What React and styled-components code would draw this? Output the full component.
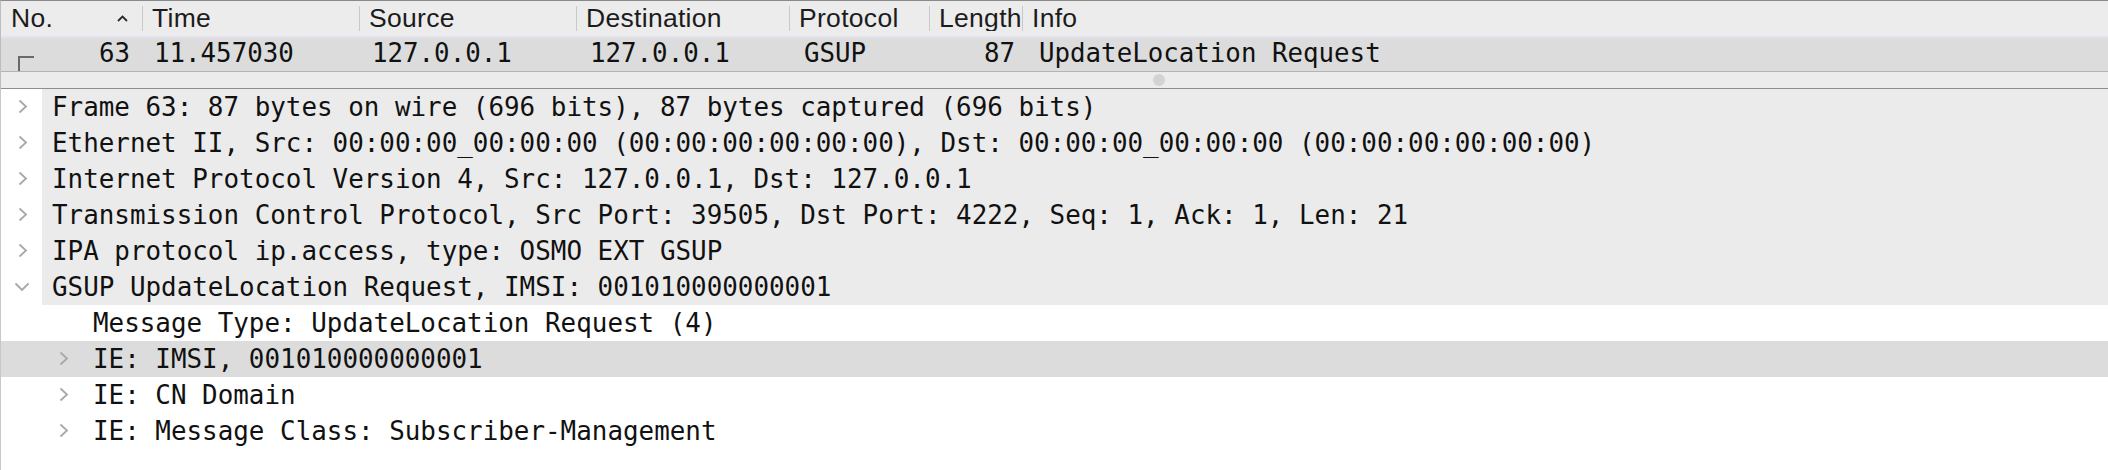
import React from "react";
import styled, { createGlobalStyle } from "styled-components";

const GlobalStyle = createGlobalStyle`
  html, body {
    margin: 0;
    padding: 0;
    background: #ffffff;
  }
`;

const mono = `"DejaVu Sans Mono", "Liberation Mono", monospace`;
const sans = `"Liberation Sans", Arial, sans-serif`;

const columns = [
  { key: "no", title: "No.", width: 141, align: "right" },
  { key: "time", title: "Time", width: 217 },
  { key: "source", title: "Source", width: 217 },
  { key: "destination", title: "Destination", width: 213 },
  { key: "protocol", title: "Protocol", width: 140 },
  { key: "length", title: "Length", width: 93, align: "right", clip: true },
  { key: "info", title: "Info", width: null },
];

const packet = {
  no: "63",
  time: "11.457030",
  source: "127.0.0.1",
  destination: "127.0.0.1",
  protocol: "GSUP",
  length: "87",
  info: "UpdateLocation Request",
};

const treeItems = [
  { text: "Frame 63: 87 bytes on wire (696 bits), 87 bytes captured (696 bits)", depth: 0, toggle: "closed" },
  { text: "Ethernet II, Src: 00:00:00_00:00:00 (00:00:00:00:00:00), Dst: 00:00:00_00:00:00 (00:00:00:00:00:00)", depth: 0, toggle: "closed" },
  { text: "Internet Protocol Version 4, Src: 127.0.0.1, Dst: 127.0.0.1", depth: 0, toggle: "closed" },
  { text: "Transmission Control Protocol, Src Port: 39505, Dst Port: 4222, Seq: 1, Ack: 1, Len: 21", depth: 0, toggle: "closed" },
  { text: "IPA protocol ip.access, type: OSMO EXT GSUP", depth: 0, toggle: "closed" },
  { text: "GSUP UpdateLocation Request, IMSI: 001010000000001", depth: 0, toggle: "open" },
  { text: "Message Type: UpdateLocation Request (4)", depth: 1, toggle: null },
  { text: "IE: IMSI, 001010000000001", depth: 1, toggle: "closed", selected: true },
  { text: "IE: CN Domain", depth: 1, toggle: "closed" },
  { text: "IE: Message Class: Subscriber-Management", depth: 1, toggle: "closed" },
];

const Window = styled.div`
  width: 2108px;
  height: 470px;
  overflow: hidden;
  display: flex;
  flex-direction: column;
  background: #ffffff;
`;

const PacketList = styled.div`
  border-top: 1px solid #8a8a8a;
  border-left: 1px solid #bdbdbd;
  display: flex;
  flex-direction: column;
`;

const HeaderBar = styled.div`
  display: flex;
  align-items: center;
  height: 35px;
  background: #ececec;
  border-bottom: 2px solid #e4e2ef;
`;

const HeaderCell = styled.div`
  display: flex;
  align-items: center;
  box-sizing: border-box;
  height: 25px;
  width: ${(p) => (p.$width ? `${p.$width}px` : "auto")};
  flex: ${(p) => (p.$width ? "none" : "1")};
  padding-left: ${(p) => (p.$first ? "10px" : "9px")};
  padding-right: ${(p) => (p.$first ? "14px" : "0")};
  border-left: ${(p) => (p.$first ? "none" : "1px solid #c9c9c9")};
  overflow: ${(p) => (p.$clip ? "hidden" : "visible")};
  white-space: nowrap;
  font-family: ${sans};
  font-size: 26.5px;
  line-height: 25px;
  letter-spacing: 0.3px;
  color: #1c1c1c;
`;

const SortCaret = styled.svg`
  margin-left: auto;
  flex: none;
`;

const PacketRow = styled.div`
  display: flex;
  height: 33px;
  background: #dcdcdc;
  border-bottom: 1px solid #b4b4b4;
`;

const DataCell = styled.div`
  display: flex;
  align-items: center;
  justify-content: ${(p) => (p.$align === "right" ? "flex-end" : "flex-start")};
  box-sizing: border-box;
  width: ${(p) => (p.$width ? `${p.$width}px` : "auto")};
  flex: ${(p) => (p.$width ? "none" : "1")};
  padding-left: ${(p) => (p.$first ? "0" : "11px")};
  padding-right: ${(p) => (p.$align === "right" ? "12px" : "0")};
  padding-bottom: 3px;
  margin-left: ${(p) => (p.$first ? "0" : "1px")};
  white-space: nowrap;
  font-family: ${mono};
  font-size: 25.8px;
  color: #111111;
`;

const RelatedMark = styled.svg`
  align-self: flex-end;
  margin-left: 17px;
  margin-bottom: -3px;
  flex: none;
`;

const NoValue = styled.span`
  margin-left: auto;
`;

const Splitter = styled.div`
  height: 16px;
  display: flex;
  align-items: center;
  padding-left: 1152px;
  background: #ececec;
  border-bottom: 1px solid #8e8e8e;
`;

const SplitterHandle = styled.div`
  width: 12px;
  height: 12px;
  border-radius: 50%;
  background: #d3d3d3;
`;

const Tree = styled.div`
  flex: 1;
  border-left: 1px solid #c8c8c8;
  display: flex;
  flex-direction: column;
`;

const TreeRow = styled.div`
  display: flex;
  height: 36px;
  background: ${(p) => (p.$selected ? "#dcdcdc" : "transparent")};
`;

const Toggle = styled.div`
  flex: none;
  width: 41px;
  margin-left: ${(p) => p.$depth * 41}px;
  display: flex;
  align-items: center;
  justify-content: ${(p) => (p.$open ? "center" : "flex-start")};
  padding-left: ${(p) => (p.$open ? "0" : "17px")};
  box-sizing: border-box;
  padding-bottom: 1px;
`;

const Label = styled.div`
  flex: 1;
  display: flex;
  align-items: center;
  padding-left: 10px;
  white-space: nowrap;
  background: ${(p) => (p.$shaded ? "#ebebeb" : "transparent")};
  font-family: ${mono};
  font-size: 25.9px;
  color: #111111;
`;

const Chevron = ({ open }) =>
  open ? (
    <svg width="16" height="10" viewBox="0 0 16 10">
      <path d="M1.5 1.5 L8 8 L14.5 1.5" fill="none" stroke="#a8a8a8" strokeWidth="1.8" />
    </svg>
  ) : (
    <svg width="10" height="15" viewBox="0 0 10 15">
      <path d="M1.5 1.5 L8 7.5 L1.5 13.5" fill="none" stroke="#a8a8a8" strokeWidth="1.8" />
    </svg>
  );

const App = () => {
  return (
    <Window>
      <GlobalStyle />
      <PacketList>
        <HeaderBar>
          {columns.map((col, i) => (
            <HeaderCell key={col.key} $width={col.width} $first={i === 0} $clip={col.clip}>
              {col.title}
              {i === 0 && (
                <SortCaret width="11" height="7" viewBox="0 0 11 7">
                  <path d="M1 6 L5.5 1.5 L10 6" fill="none" stroke="#2a2a2a" strokeWidth="1.8" />
                </SortCaret>
              )}
            </HeaderCell>
          ))}
        </HeaderBar>
        <PacketRow>
          {columns.map((col, i) => (
            <DataCell key={col.key} $width={col.width} $align={col.align} $first={i === 0}>
              {i === 0 ? (
                <>
                  <RelatedMark width="16" height="15" viewBox="0 0 16 15">
                    <path d="M1 15 V1 H16" fill="none" stroke="#6a6a6a" strokeWidth="2" />
                  </RelatedMark>
                  <NoValue>{packet[col.key]}</NoValue>
                </>
              ) : (
                packet[col.key]
              )}
            </DataCell>
          ))}
        </PacketRow>
        <Splitter>
          <SplitterHandle />
        </Splitter>
      </PacketList>
      <Tree>
        {treeItems.map((item) => (
          <TreeRow key={item.text} $selected={item.selected}>
            <Toggle $depth={item.depth} $open={item.toggle === "open"}>
              {item.toggle && <Chevron open={item.toggle === "open"} />}
            </Toggle>
            <Label $shaded={item.depth === 0}>{item.text}</Label>
          </TreeRow>
        ))}
      </Tree>
    </Window>
  );
};

export default App;
